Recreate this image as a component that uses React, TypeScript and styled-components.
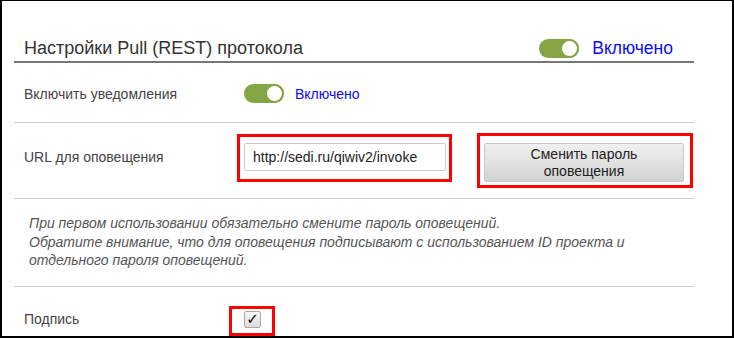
import React from "react";
import styled, { createGlobalStyle } from "styled-components";

const GlobalStyle = createGlobalStyle`
  html, body {
    margin: 0;
    padding: 0;
    background: #fff;
  }
  body {
    font-family: "Liberation Sans", Arial, sans-serif;
  }
`;

const Frame = styled.div`
  width: 734px;
  height: 338px;
  box-sizing: border-box;
  border: 2px solid #000;
  border-top-width: 1px;
  padding: 0 38px 0 12px;
  overflow: hidden;
  background: #fff;
`;

const Header = styled.div`
  display: flex;
  align-items: center;
  justify-content: space-between;
  margin-top: 37px;
  padding: 0 21px 2px 10px;
  border-bottom: 2px solid #777;
`;

const Title = styled.h2`
  margin: 0;
  font-size: 18px;
  font-weight: normal;
  color: #333;
  line-height: 21px;
`;

const SwitchGroup = styled.div<{ $large?: boolean }>`
  display: flex;
  align-items: center;
  gap: ${(p) => (p.$large ? "13px" : "11px")};
`;

const Track = styled.span`
  position: relative;
  display: inline-block;
  width: 40px;
  height: 19px;
  border-radius: 10px;
  background: #85a443;
  box-sizing: border-box;
`;

const Knob = styled.span`
  position: absolute;
  right: 0;
  top: 0;
  width: 19px;
  height: 19px;
  box-sizing: border-box;
  border-radius: 50%;
  border: 2px solid #85a443;
  background: #fff;
`;

const SwitchText = styled.span<{ $large?: boolean }>`
  color: #0a0aff;
  font-size: ${(p) => (p.$large ? "17.5px" : "14px")};
`;

const Row = styled.div<{ $pad: string; $last?: boolean }>`
  display: flex;
  align-items: ${(p) => (p.$last ? "flex-start" : "center")};
  padding: ${(p) => p.$pad};
  padding-left: 10px;
  border-bottom: ${(p) => (p.$last ? "none" : "1px solid #ccc")};
`;

const TopRow = styled(Row)`
  align-items: flex-start;
`;

const Label = styled.div<{ $lh?: number }>`
  width: 220px;
  flex-shrink: 0;
  font-size: 14px;
  color: #444;
  line-height: ${(p) => (p.$lh ? `${p.$lh}px` : "18px")};
`;

const Highlight = styled.span<{ $inset: string }>`
  position: relative;
  display: inline-flex;
  &::after {
    content: "";
    position: absolute;
    inset: ${(p) => p.$inset};
    border: 3px solid #ff0000;
    pointer-events: none;
  }
`;

const UrlInput = styled.input`
  width: 202px;
  height: 28px;
  box-sizing: border-box;
  border: 1px solid #ccc;
  border-radius: 2px;
  padding: 0 8px;
  font-family: "Liberation Sans", Arial, sans-serif;
  font-size: 14px;
  color: #222;
  background: #fff;
  outline: none;
`;

const Controls = styled.div`
  display: flex;
  align-items: flex-start;
  gap: 38px;
`;

const Button = styled.button`
  width: 200px;
  height: 39px;
  box-sizing: border-box;
  border: 1px solid #c8c8c8;
  border-radius: 2px;
  background: linear-gradient(to bottom, #f0f0f0, #d3d3d3);
  font-family: "Liberation Sans", Arial, sans-serif;
  font-size: 14px;
  line-height: 17px;
  color: #222;
  padding: 1px 10px 0;
`;

const Note = styled.p`
  margin: 0;
  padding-left: 5px;
  font-style: italic;
  font-size: 14px;
  line-height: 18.5px;
  color: #555;
`;

const Checkbox = styled.span`
  display: inline-flex;
  align-items: center;
  justify-content: center;
  width: 17px;
  height: 17px;
  box-sizing: border-box;
  border: 1px solid #aaa;
  border-radius: 2px;
  background: linear-gradient(to bottom, #f6f6f6, #dcdcdc);
  font-family: "DejaVu Sans", sans-serif;
  font-size: 15px;
  color: #000;
  line-height: 1;
`;

const Switch = ({ large }: { large?: boolean }) => (
  <SwitchGroup $large={large}>
    <Track>
      <Knob />
    </Track>
    <SwitchText $large={large}>Включено</SwitchText>
  </SwitchGroup>
);

export default function App() {
  return (
    <Frame>
      <GlobalStyle />
      <Header>
        <Title>Настройки Pull (REST) протокола</Title>
        <Switch large />
      </Header>

      <Row $pad="21px 0 19px">
        <Label>Включить уведомления</Label>
        <Switch />
      </Row>

      <TopRow $pad="20px 0 16px">
        <Label $lh={28}>URL для оповещения</Label>
        <Controls>
          <Highlight $inset="-9px -6px -11px -7px">
            <UrlInput readOnly defaultValue="http://sedi.ru/qiwiv2/invoke" />
          </Highlight>
          <Highlight $inset="-10px -9px -6px -7px">
            <Button>
              Сменить пароль
              <br />
              оповещения
            </Button>
          </Highlight>
        </Controls>
      </TopRow>

      <Row $pad="15px 0 16px">
        <Note>
          При первом использовании обязательно смените пароль оповещений.
          <br />
          Обратите внимание, что для оповещения подписывают с использованием ID проекта и
          <br />
          отдельного пароля оповещений.
        </Note>
      </Row>

      <Row $pad="24px 0 0" $last>
        <Label $lh={17}>Подпись</Label>
        <Highlight $inset="-5px -14px -8px -15px">
          <Checkbox>✓</Checkbox>
        </Highlight>
      </Row>
    </Frame>
  );
}
